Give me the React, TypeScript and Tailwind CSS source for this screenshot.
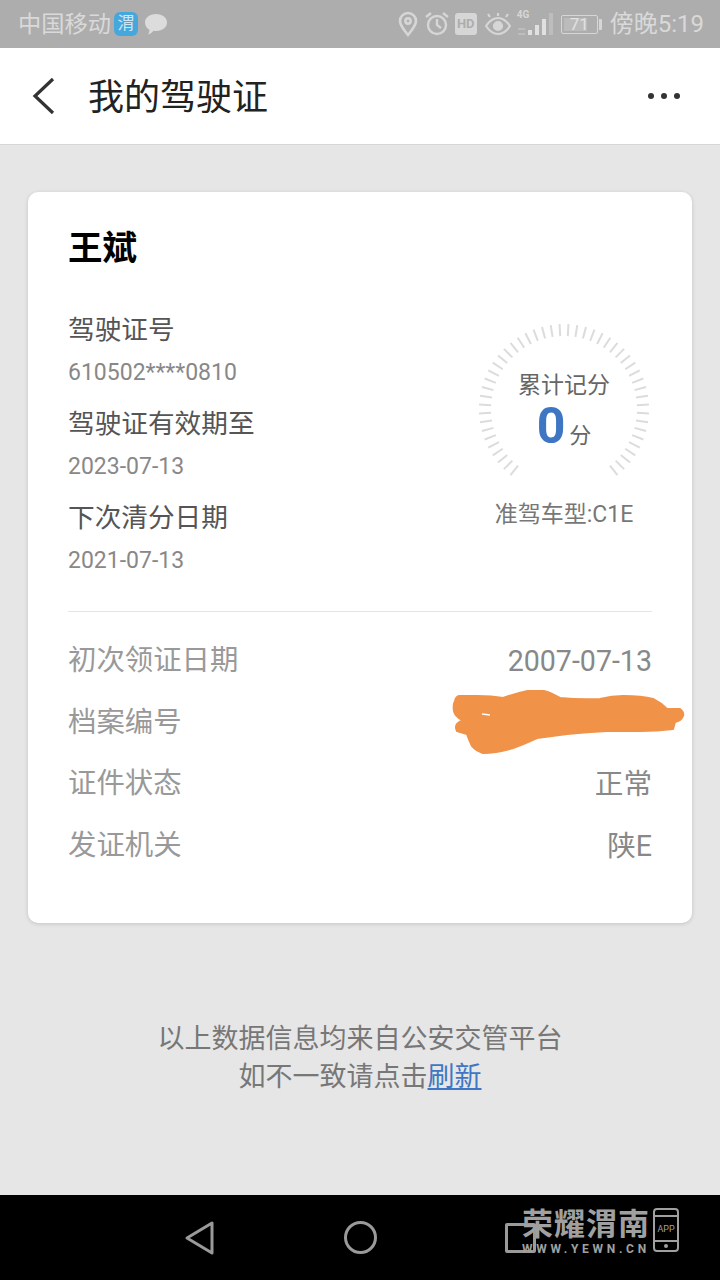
const cjk = 'font-["Roboto","Noto_Sans_CJK_SC",sans-serif]';

const ticks: number[] = [];
for (let a = -141; a <= 141; a += 6) ticks.push(a);

function Dial() {
  return (
    <div className="relative w-[172px] h-[172px]">
      <svg width="172" height="172" viewBox="0 0 172 172" className="absolute inset-0">
        {ticks.map((a) => (
          <line key={a} x1="86" y1="1" x2="86" y2="13" stroke="#dcdcdc" strokeWidth="2" transform={`rotate(${a} 86 86)`} />
        ))}
      </svg>
      <div className="relative flex flex-col items-center pt-[48px]">
        <span className="text-[23px] leading-[30px] text-[#666666]">累计记分</span>
        <div className="flex items-baseline gap-[4px] h-[52px]">
          <span className="text-[50px] leading-[50px] font-bold text-[#3f76c4]">0</span>
          <span className="text-[22px] text-[#666666]">分</span>
        </div>
      </div>
    </div>
  );
}

function Row({ label, value }: { label: string; value: string }) {
  return (
    <div className="flex items-center justify-between h-[61.5px]">
      <span className="text-[28.4px] text-[#999999]">{label}</span>
      <span className="text-[28.6px] text-[#888888]">{value}</span>
    </div>
  );
}

function StatusIcons() {
  return (
    <div className="flex items-center">
      <svg width="20" height="26" viewBox="0 0 20 26" fill="none" stroke="#d6d6d6" strokeWidth="2.6">
        <path d="M10 24C5 18 2 14 2 10a8 8 0 0 1 16 0c0 4-3 8-8 14z" />
        <circle cx="10" cy="10" r="2.6" />
      </svg>
      <svg width="24" height="26" viewBox="0 0 24 26" fill="none" stroke="#d6d6d6" strokeWidth="2.4" className="ml-[7px]">
        <circle cx="12" cy="14" r="9" />
        <path d="M12 8v6l4 3M1 6l5-4M23 6l-5-4" />
      </svg>
      <div className="ml-[6px] w-[22px] h-[22px] rounded-[3px] bg-[#d6d6d6] flex items-center justify-center text-[13px] font-bold text-[#adadad]">HD</div>
      <svg width="26" height="24" viewBox="0 0 26 24" fill="none" stroke="#d6d6d6" strokeWidth="2.2" className="ml-[8px]">
        <path d="M1 14c4-6 8-8 12-8s8 2 12 8c-4 6-8 8-12 8s-8-2-12-8z" />
        <circle cx="13" cy="14" r="4" fill="#d6d6d6" />
        <path d="M5 5L3 2M13 4V1M21 5l2-3" />
      </svg>
      <div className="relative ml-[5px] w-[39px] h-[26px]">
        <span className="absolute left-[1px] top-[-2px] text-[10px] leading-[12px] font-bold text-[#d6d6d6]">4G</span>
        <svg width="39" height="26" viewBox="0 0 39 26" className="absolute inset-0">
          <rect x="12" y="19" width="4" height="5" fill="#e0e0e0" />
          <rect x="19" y="14" width="4" height="10" fill="#e0e0e0" />
          <rect x="26" y="8" width="4" height="16" fill="#e0e0e0" />
          <rect x="33" y="2" width="4" height="22" fill="#bdbdbd" />
          <path d="M2 18h7M2 23h7" stroke="#bdbdbd" strokeWidth="2" />
        </svg>
      </div>
      <div className="ml-[6px] flex items-center">
        <div className="relative w-[37px] h-[19px] rounded-[2px] border border-[#d6d6d6] flex items-center justify-center">
          <div className="absolute left-[2px] top-[2px] bottom-[2px] w-[23px] bg-[#bbbbbb]" />
          <span className="relative text-[17px] leading-none text-[#e2e2e2]">71</span>
        </div>
        <div className="ml-[1px] w-[3px] h-[11px] bg-[#d6d6d6] rounded-r-[1px]" />
      </div>
      <span className="ml-[8px] text-[24px] text-[#d9d9d9]">傍晚5:19</span>
    </div>
  );
}

export default function App() {
  return (
    <div className={`${cjk} w-[720px] h-[1280px] flex flex-col bg-[#e6e6e6] overflow-hidden`}>
      <div className="h-[48px] bg-[#adadad] flex items-center justify-between pl-[18px] pr-[16px]">
        <div className="flex items-center">
          <span className="text-[23.25px] text-[#d9d9d9]">中国移动</span>
          <div className="ml-[3px] w-[24px] h-[24px] rounded-[6px] bg-[#45a7dc] flex items-center justify-center text-[17px] text-[#cfe6f3]">渭</div>
          <svg width="24" height="24" viewBox="0 0 24 24" className="ml-[6px]">
            <path d="M12 2c6.500 0 11 3.600 11 8.500S18.500 19 12 19c-1 0-1.700-.1-2.500-.2C8 20.600 6.500 22 4 22.500c1-1.500 1.500-3 1.400-4.800C2.800 16.200 1 13.600 1 10.500 1 5.600 5.500 2 12 2z" fill="#dcdcdc" />
          </svg>
        </div>
        <StatusIcons />
      </div>

      <div className="h-[97px] bg-white border-b border-[#d6d6d6] flex items-center pl-[32px] pr-[40px]">
        <svg width="24" height="38" viewBox="0 0 24 38" fill="none" stroke="#333333" strokeWidth="3.2">
          <path d="M21 2L3 19l18 17" />
        </svg>
        <span className="ml-[32px] pt-[3px] text-[36px] text-[#222222]">我的驾驶证</span>
        <div className="ml-auto flex gap-[7px]">
          <div className="w-[6px] h-[6px] rounded-full bg-[#333333]" />
          <div className="w-[6px] h-[6px] rounded-full bg-[#333333]" />
          <div className="w-[6px] h-[6px] rounded-full bg-[#333333]" />
        </div>
      </div>

      <div className="flex-1 px-[28px] pt-[47px]">
        <div className="h-[731px] bg-white rounded-[10px] shadow-[0_1px_4px_rgba(0,0,0,0.15)] px-[40px] pt-[33px]">
          <div className="text-[34.5px] leading-[46px] font-bold text-black">王斌</div>
          <div className="mt-[40px] flex justify-between border-b border-[#e4e4e4] h-[301px]">
            <div className="flex flex-col">
              <span className="text-[26.67px] leading-[38px] text-[#555555]">驾驶证号</span>
              <span className="mt-[4px] text-[23px] leading-[40px] text-[#888888]">610502****0810</span>
              <span className="mt-[12px] text-[26.67px] leading-[38px] text-[#555555]">驾驶证有效期至</span>
              <span className="mt-[5px] text-[23px] leading-[38px] text-[#888888]">2023-07-13</span>
              <span className="mt-[13px] text-[26.67px] leading-[38px] text-[#555555]">下次清分日期</span>
              <span className="mt-[5px] text-[23px] leading-[38px] text-[#888888]">2021-07-13</span>
            </div>
            <div className="flex flex-col items-center mr-[2px] mt-[12px]">
              <Dial />
              <span className="mt-[3px] text-[23px] text-[#777777]">准驾车型:C1E</span>
            </div>
          </div>
          <div className="pt-[19px]">
            <Row label="初次领证日期" value="2007-07-13" />
            <div className="relative">
              <Row label="档案编号" value="" />
              <svg width="236" height="66" viewBox="0 0 236 66" className="absolute left-[384px] top-[-3px]">
                <path
                  d="M3 11Q4 6 8 6L25 6Q40 6 51 8Q68 2 81 0Q92 0 98 3L108 8Q128 10 148 9Q160 6 171 6Q190 6 201 9Q209 13 215 19L228 19Q232 22 231 26Q229 31 223 32L221 39Q205 41 188 41L155 41Q135 42 115 44L85 48Q72 54 61 58Q45 63 31 63Q24 61 20 56Q17 50 15 44L5 41Q3 37 5 34L10 30Q3 26 2 21Q1 15 3 11z"
                  fill="#f09248"
                  stroke="#f09248"
                  strokeWidth="2"
                  strokeLinejoin="round"
                />
                <path d="M30 24l8 1" stroke="#ffffff" strokeWidth="1.5" />
              </svg>
            </div>
            <Row label="证件状态" value="正常" />
            <Row label="发证机关" value="陕E" />
          </div>
        </div>
        <div className="mt-[97px] text-center text-[27px] leading-[38px] text-[#777777]">
          <div>以上数据信息均来自公安交管平台</div>
          <div>
            如不一致请点击<span className="text-[#3f76c4] underline">刷新</span>
          </div>
        </div>
      </div>

      <div className="relative h-[85px] bg-black px-[120px] grid grid-cols-3 items-center">
        <div className="flex justify-center">
          <svg width="32" height="36" viewBox="0 0 32 36" fill="none" stroke="#9a9a9a" strokeWidth="3">
            <path d="M28 3v30L3 18z" strokeLinejoin="round" />
          </svg>
        </div>
        <div className="flex justify-center">
          <div className="w-[33px] h-[33px] rounded-full border-[3px] border-[#9a9a9a]" />
        </div>
        <div className="flex justify-center">
          <div className="w-[31px] h-[30px] rounded-[2px] border-[3px] border-[#9a9a9a]" />
        </div>
        <div className="absolute left-[522px] top-[13px] flex items-start">
          <div className="flex flex-col w-[127px]">
            <span className="text-[31px] leading-[34px] tracking-[1px] font-bold text-[#a0a0a0] whitespace-nowrap">荣耀渭南</span>
            <span className="text-[12px] leading-[14px] font-bold tracking-[3.7px] text-[#a0a0a0] whitespace-nowrap">WWW.YEWN.CN</span>
          </div>
          <div className="relative ml-[4px] w-[26px] h-[44px] rounded-[4px] border-[2px] border-[#a0a0a0] flex items-center justify-center text-[9px] text-[#a0a0a0]">
            APP
            <div className="absolute left-0 right-0 top-[5px] h-[2px] bg-[#a0a0a0]" />
            <div className="absolute left-0 right-0 bottom-[8px] h-[2px] bg-[#a0a0a0]" />
            <div className="absolute left-[9px] bottom-[2px] w-[4px] h-[4px] rounded-full bg-[#a0a0a0]" />
          </div>
        </div>
      </div>
    </div>
  );
}
